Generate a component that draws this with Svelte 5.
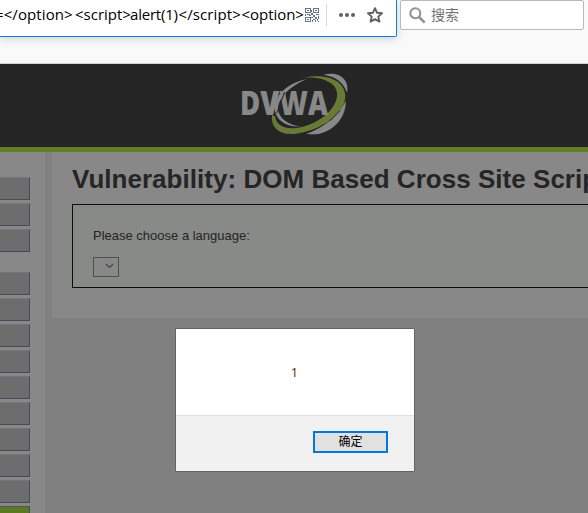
<script>
  const groups = [3, 9];
</script>

<div class="window">
  <div class="toolbar">
    <div class="urlbar">
      <div class="url">
        <span class="t1">=&lt;/option&gt;</span><span class="t2">&lt;script&gt;</span><span class="t3">alert(1)</span><span class="t4">&lt;/script&gt;</span><span class="t5">&lt;option&gt;</span>
      </div>
      <svg class="qr" width="14" height="14" viewBox="0 0 14 14" fill="#6c7580" shape-rendering="crispEdges">
        <path fill-rule="evenodd" d="M0 0h6v5H0zM1 1v3h4V1zM8 0h6v5H8zM9 1v3h4V1zM0 9h6v5H0zM1 10v3h4v-3z" />
        <path d="M2 2h2v1H2zM10 2h2v1h-2zM2 11h2v1H2zM6 2h1v2H6zM6 5h2v2H6zM2 6h3v1H2zM0 6h1v2H0zM4 7h2v1H4zM8 7h2v2H8zM11 6h3v1h-3zM6 9h2v1H6zM10 9h2v2h-2zM13 8h1v3h-1zM8 11h2v1H8zM7 12h1v2H7zM10 12h1v2h-1zM12 11h1v2h-1zM13 13h1v1h-1z" />
      </svg>
      <span class="divider"></span>
      <svg class="dots" width="16" height="4" viewBox="0 0 16 4" fill="#606060">
        <circle cx="2" cy="2" r="2" /><circle cx="8" cy="2" r="2" /><circle cx="14" cy="2" r="2" />
      </svg>
      <svg class="star" width="16" height="16" viewBox="0 0 16 16" fill="none" stroke="#606060" stroke-width="1.9" stroke-linejoin="round">
        <path d="M8 1.2 10 5.7 15 6.2 11.3 9.6 12.4 14.6 8 12.1 3.6 14.6 4.7 9.6 1 6.2 6 5.7Z" />
      </svg>
    </div>
    <div class="search">
      <svg width="17" height="17" viewBox="0 0 17 17" fill="none" stroke="#939393">
        <circle cx="6.3" cy="6.3" r="5" stroke-width="2.1" />
        <path d="M10 10 15.7 15.7" stroke-width="2.5" />
      </svg>
      <span>搜索</span>
    </div>
  </div>

  <header>
    <svg width="115" height="68" viewBox="0 0 345 204">
      <path fill="#888" d="M256 14C300 2 336 26 327 68C318 40 296 20 256 14Z" />
      <path fill="#888" d="M323 92C326 150 270 204 205 191C254 176 302 136 323 92Z" />
      <path fill="#888" d="M208 27C150 38 108 76 110 118C114 152 148 174 190 169C150 166 121 142 120 116C122 82 156 48 208 27Z" />
      <path fill="#687a36" d="M198 23C262 10 318 28 322 76C324 128 250 184 168 192C122 195 98 172 102 136L111 138C114 168 146 182 192 171C258 153 302 106 297 68C292 36 252 20 198 23Z" />
      <path d="M276 152 306 122" stroke="#252525" stroke-width="3" />
      <text x="6" y="136" textLength="264" lengthAdjust="spacingAndGlyphs">DVWA</text>
      <path d="M140 66 116 130" stroke="#252525" stroke-width="3" />
    </svg>
  </header>

  <div class="page">
    <nav>
      {#each groups as count, g}
        <ul>
          {#each Array(count) as _}
            <li></li>
          {/each}
          {#if g === 1}<li class="selected"></li>{/if}
        </ul>
      {/each}
    </nav>
    <main>
      <h1>Vulnerability: DOM Based Cross Site Scrip</h1>
      <section>
        <p>Please choose a language:</p>
        <div class="select">
          <svg width="9" height="6" viewBox="0 0 9 6" fill="none" stroke="#444" stroke-width="1.1"><path d="M1 1 4.500 4.500 8 1" /></svg>
        </div>
      </section>
    </main>
  </div>

  <div class="dialog">
    <div class="message">1</div>
    <div class="actions"><button>确定</button></div>
  </div>
</div>

<style>
  .window {
    position: relative;
    width: 588px;
    height: 513px;
    overflow: hidden;
    background: #808080;
    font-family: "Liberation Sans", "Noto Sans CJK SC", sans-serif;
  }
  .toolbar {
    display: flex;
    align-items: flex-start;
    gap: 3px;
    height: 64px;
    box-sizing: border-box;
    background: #f9f9f9;
    border-bottom: 1px solid #d2d2d2;
  }
  .urlbar {
    display: flex;
    align-items: center;
    flex: none;
    box-sizing: border-box;
    width: 397px;
    height: 37px;
    padding-bottom: 6px;
    background: #fff;
    border-right: 1px solid #0a84e0;
    border-bottom: 1px solid #0a7ee0;
    border-radius: 0 0 2px 0;
    box-shadow: 0 2px 8px rgba(0, 0, 0, 0.16);
  }
  .url {
    display: flex;
    flex: none;
    width: 309px;
    margin: -2px 0 0 -5px;
    white-space: nowrap;
    color: #000;
    font: 15px/20px "Open Sans", sans-serif;
  }
  .url span { flex: none; }
  .t1 { width: 80px; letter-spacing: 0.1px; }
  .t2 { width: 55px; }
  .t3 { width: 48.5px; letter-spacing: -0.2px; }
  .t4 { width: 63px; letter-spacing: 0.1px; }
  .t5 { width: 62px; letter-spacing: -0.05px; }
  .qr { flex: none; margin-left: 1px; }
  .divider { width: 1px; height: 22px; margin-left: 7px; background: #d9d9d9; }
  .dots { margin-left: 12px; }
  .star { margin-left: 12px; }
  .search {
    display: flex;
    align-items: center;
    box-sizing: border-box;
    width: 184px;
    height: 30px;
    padding-left: 8px;
    background: #fff;
    border: 1px solid #b9b9b9;
    border-radius: 2px;
  }
  .search span {
    margin: -2px 0 0 5px;
    color: #737373;
    font: 14px/20px "Noto Sans CJK SC", sans-serif;
  }
  header {
    height: 83px;
    padding: 6px 0 0 238px;
    box-sizing: border-box;
    background: #252525;
  }
  header svg { display: block; }
  header text {
    fill: #888;
    font: 800 98px "Open Sans", sans-serif;
  }
  .page {
    display: flex;
    align-items: flex-start;
    gap: 7px;
    height: 366px;
    box-sizing: border-box;
    border-top: 5px solid #647e27;
  }
  nav {
    flex: none;
    width: 45px;
    height: 361px;
    padding-top: 25px;
    box-sizing: border-box;
    background: #888;
    overflow: hidden;
  }
  ul {
    display: grid;
    gap: 3px;
    margin: 0 0 20px;
    padding: 0;
    list-style: none;
  }
  li {
    width: 30px;
    height: 23px;
    box-sizing: border-box;
    background: #6d6d6d;
    border: solid #777;
    border-width: 1px 1px 1px 0;
    border-right-color: #474a5a;
    border-bottom-color: #474a5a;
  }
  .selected { background: #5b7a20; border-top-color: #4b5364; }
  main {
    flex: 1;
    min-width: 0;
    height: 166px;
    padding: 11px 0 0 20px;
    box-sizing: border-box;
    background: #888;
    overflow: hidden;
  }
  h1 {
    margin: 0;
    white-space: nowrap;
    color: #252525;
    font-size: 26px;
    line-height: 32px;
    letter-spacing: 0.03px;
  }
  section {
    width: 620px;
    height: 84px;
    margin-top: 9px;
    padding: 22px 20px 0;
    box-sizing: border-box;
    border: 1px solid #0b0d0b;
    background: #878a87;
  }
  p { margin: 0; color: #252525; font-size: 13px; line-height: 18px; }
  .select {
    display: flex;
    align-items: center;
    justify-content: flex-end;
    width: 26px;
    height: 20px;
    margin-top: 12px;
    padding: 0 4px 2px 0;
    box-sizing: border-box;
    border: 1px solid #505050;
    background: #888;
  }
  .dialog {
    position: absolute;
    left: 175px;
    top: 328px;
    width: 240px;
    height: 144px;
    box-sizing: border-box;
    border: 1px solid #646464;
    border-radius: 1px;
    background: #fff;
  }
  .message {
    height: 86px;
    box-sizing: border-box;
    padding: 35px 0 0;
    text-align: center;
    text-indent: -1px;
    color: #602800;
    font: 12px/18px "Noto Sans", sans-serif;
  }
  .actions {
    display: flex;
    justify-content: flex-end;
    height: 56px;
    padding: 15px 26px 0;
    box-sizing: border-box;
    border-top: 1px solid #dfdfdf;
    background: #f1f1f1;
  }
  button {
    width: 75px;
    height: 22px;
    padding: 0 0 2px;
    border: 2px solid #0078d7;
    background: #e1e1e1;
    color: #000;
    font: 12px/16px "Noto Sans CJK SC", sans-serif;
  }
</style>
